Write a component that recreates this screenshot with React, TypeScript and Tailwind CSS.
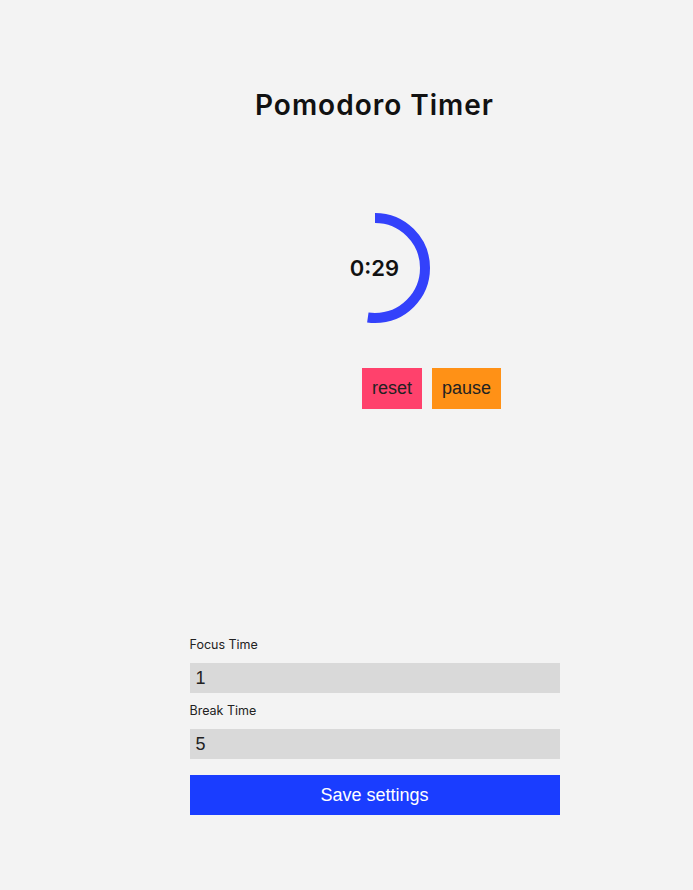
import React from "react";

export default function App() {
  const r = 50;
  const c = 2 * Math.PI * r;
  const frac = 188 / 360;
  return (
    <div className="min-h-[890px] w-full bg-[#f3f3f3] flex flex-col items-center" style={{ fontFamily: "'Liberation Sans', Arial, sans-serif" }}>
      <div className="w-[370px] ml-[56px] flex flex-col items-center">
        <h1 className="mt-[86px] text-[28px] leading-[38px] font-semibold text-[#111] tracking-[1px]" style={{ fontFamily: "Inter, sans-serif" }}>
          Pomodoro Timer
        </h1>
        <div className="mt-[84px] relative w-[120px] h-[120px]">
          <svg width="120" height="120" viewBox="0 0 120 120" className="absolute inset-0">
            <circle
              cx="60"
              cy="60"
              r={r}
              fill="none"
              stroke="#3341fb"
              strokeWidth="10"
              strokeDasharray={`${c * frac} ${c}`}
              transform="rotate(-90 60 60)"
            />
          </svg>
          <div className="absolute inset-0 flex items-center justify-center text-[22px] font-semibold text-[#111]" style={{ fontFamily: "Inter, sans-serif" }}>
            0:29
          </div>
        </div>
        <div className="mt-[40px] ml-[114px] flex gap-[10px]">
          <button className="h-[41px] w-[60px] bg-[#ff416c] text-[18px] text-[#222]">reset</button>
          <button className="h-[41px] w-[69px] bg-[#ff9116] text-[18px] text-[#222]">pause</button>
        </div>
      </div>
      <div className="mt-[228px] w-[370px] ml-[56px] flex flex-col">
        <label className="text-[12.5px] leading-[16px] text-[#222] mb-[10px]" style={{ fontFamily: "Inter, sans-serif" }}>Focus Time</label>
        <div className="h-[30px] bg-[#d9d9d9] px-[6px] flex items-center text-[18px] text-[#222]">1</div>
        <label className="mt-[10px] text-[12.5px] leading-[16px] text-[#222] mb-[10px]" style={{ fontFamily: "Inter, sans-serif" }}>Break Time</label>
        <div className="h-[30px] bg-[#d9d9d9] px-[6px] flex items-center text-[18px] text-[#222]">5</div>
        <button className="mt-[16px] h-[40px] bg-[#1a3dff] text-white text-[18px]">Save settings</button>
      </div>
    </div>
  );
}
